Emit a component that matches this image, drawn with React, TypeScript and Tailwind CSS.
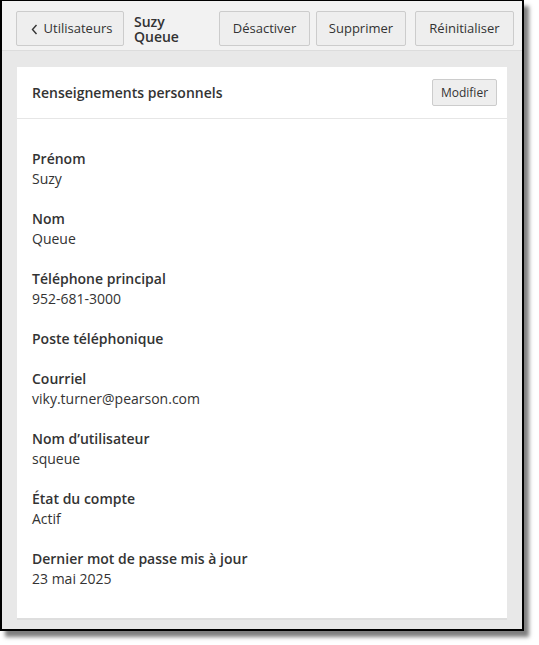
const fields: { label: string; value?: string }[] = [
  { label: "Prénom", value: "Suzy" },
  { label: "Nom", value: "Queue" },
  { label: "Téléphone principal", value: "952-681-3000" },
  { label: "Poste téléphonique" },
  { label: "Courriel", value: "viky.turner@pearson.com" },
  { label: "Nom d’utilisateur", value: "squeue" },
  { label: "État du compte", value: "Actif" },
  { label: "Dernier mot de passe mis à jour", value: "23 mai 2025" },
];

const btn =
  "h-[35px] bg-[#eeeeee] border border-[#cccccc] rounded-[2px] text-[13px] text-[#333] flex items-center justify-center";

export default function App() {
  return (
    <div className="w-[539px] h-[645px] bg-white font-['Open_Sans',sans-serif] text-[#333]">
      <div className="w-[524px] h-[631px] border-2 border-t border-black bg-[#e8e8e8] flex flex-col shadow-[5px_6px_4px_rgba(0,0,0,0.5)]">
        <div className="h-[50px] shrink-0 bg-[#f2f2f2] border-b border-[#dcdcdc] pt-[10px] pl-[14px] flex items-start">
          <button className={`${btn} w-[108px] gap-[6px] pl-[3px]`}>
            <svg width="7" height="11" viewBox="0 0 7 11" className="mt-[1px]">
              <polyline points="5.5,1 1.5,5.5 5.5,10" fill="none" stroke="#333" strokeWidth="1.4" />
            </svg>
            <span>Utilisateurs</span>
          </button>
          <div className="ml-[10px] w-[75px] text-[14px] font-semibold leading-[15px] pt-[3px]">
            <div>Suzy</div>
            <div>Queue</div>
          </div>
          <button className={`${btn} w-[91px] ml-[10px]`}>Désactiver</button>
          <button className={`${btn} w-[90px] ml-[6px]`}>Supprimer</button>
          <button className={`${btn} w-[99px] ml-[9px]`}>Réinitialiser</button>
        </div>
        <div className="flex-1 pt-[16px] pl-[15px] pr-[15px]">
          <div className="bg-white border-b-2 border-[#dedede]">
            <div className="h-[52px] border-b border-[#e6e6e6] pl-[15px] pr-[10px] flex items-center justify-between">
              <h2 className="text-[14px] font-semibold">Renseignements personnels</h2>
              <button className="h-[27px] w-[65px] bg-[#eeeeee] border border-[#cccccc] rounded-[2px] text-[12px] text-[#333]">
                Modifier
              </button>
            </div>
            <div className="pl-[15px] pt-[30px] pb-[29px] flex flex-col gap-[20px]">
              {fields.map((f) => (
                <div key={f.label} className="text-[14px] leading-[20px]">
                  <div className="font-semibold">{f.label}</div>
                  {f.value && <div>{f.value}</div>}
                </div>
              ))}
            </div>
          </div>
        </div>
      </div>
    </div>
  );
}
